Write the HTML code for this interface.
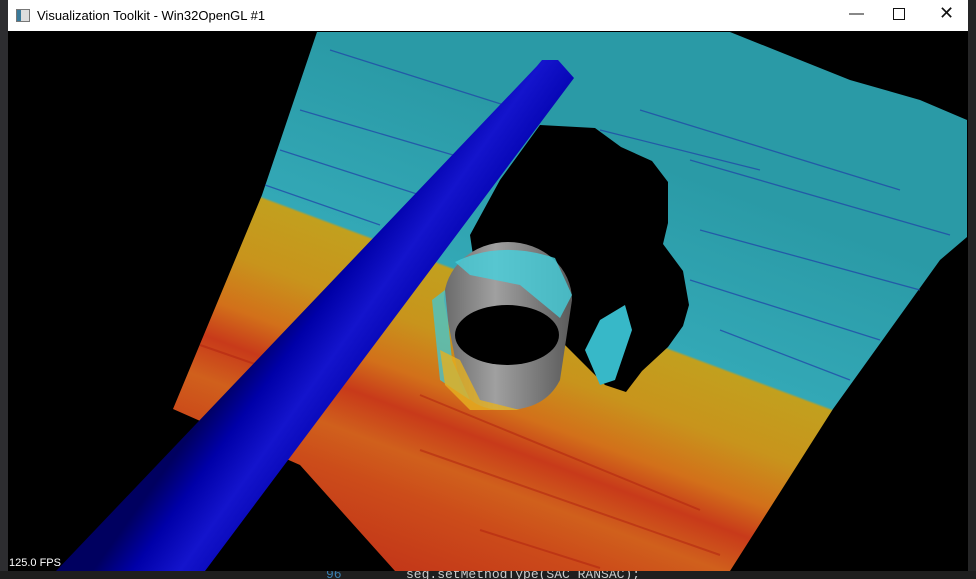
<!DOCTYPE html>
<html><head><meta charset="utf-8"><style>
html,body{margin:0;padding:0;width:976px;height:579px;overflow:hidden;background:#1e1e1e;font-family:"Liberation Sans",sans-serif}
#win{position:absolute;left:8px;top:0;width:960px;height:571px;background:#000}
#title{position:absolute;left:0;top:0;width:960px;height:31px;background:#fff}
#title .t{position:absolute;left:29px;top:8px;font-size:13px;color:#000}
#title .ic{position:absolute;left:8px;top:9px;width:12px;height:11px;border:1px solid #777;background:linear-gradient(90deg,#3a7a9a 0 4px,#ddd 4px)}
.b{position:absolute;top:5px;font-size:15px;color:#111}
#fps{position:absolute;left:1px;top:557px;font-size:11px;color:#fff}
#bot{position:absolute;left:0;top:571px;width:976px;height:8px;background:#1e1e1e;overflow:hidden}
#bot span{position:absolute;top:-4px;font-family:"Liberation Mono",monospace;font-size:13px;color:#ccc}
</style></head><body>
<div style="position:absolute;left:0;top:0;width:8px;height:579px;background:#2d2d30"></div>
<div style="position:absolute;left:968px;top:0;width:8px;height:579px;background:#252526"></div>
<div id="win">
<svg width="960" height="571" style="position:absolute;left:0;top:0">
<defs>
<linearGradient id="cl" gradientUnits="userSpaceOnUse" x1="492" y1="100" x2="317" y2="570">
<stop offset="0" stop-color="#2a9aa6"/>
<stop offset="0.34" stop-color="#33a8b6"/>
<stop offset="0.345" stop-color="#c2a01e"/>
<stop offset="0.47" stop-color="#c8941c"/>
<stop offset="0.57" stop-color="#d2701a"/>
<stop offset="0.64" stop-color="#c83a1a"/>
<stop offset="0.72" stop-color="#d0601c"/>
<stop offset="0.8" stop-color="#cc4c1a"/>
<stop offset="1" stop-color="#c03018"/>
</linearGradient>
<linearGradient id="cy" gradientUnits="userSpaceOnUse" x1="300" y1="280" x2="405" y2="355">
<stop offset="0" stop-color="#000060"/>
<stop offset="0.25" stop-color="#0000a8"/>
<stop offset="0.55" stop-color="#1414cc"/>
<stop offset="0.8" stop-color="#0808b8"/>
<stop offset="1" stop-color="#000090"/>
</linearGradient>
<linearGradient id="gr" x1="0" x2="1">
<stop offset="0" stop-color="#6a6a6a"/><stop offset="0.4" stop-color="#a0a0a0"/><stop offset="1" stop-color="#5a5a5a"/>
</linearGradient>
</defs>
<g transform="translate(-8,0)">
<polygon fill="url(#cl)" points="317,32 730,32 780,52 850,80 920,100 967,120 967,237 940,260 833,409 730,571 395,571 300,465 173,409 262,195"/>
<g stroke="#1f3fa8" stroke-width="1.3" opacity="0.7" fill="none">
<path d="M330,50 L520,110"/><path d="M300,110 L470,160"/><path d="M280,150 L420,195"/>
<path d="M265,185 L380,225"/><path d="M640,110 L900,190"/><path d="M690,160 L950,235"/>
<path d="M700,230 L920,290"/><path d="M690,280 L880,340"/><path d="M720,330 L850,380"/>
<path d="M600,130 L760,170"/>
</g>
<g stroke="#b02010" stroke-width="2" opacity="0.5" fill="none">
<path d="M200,345 L330,390"/><path d="M420,395 L700,510"/><path d="M420,450 L720,555"/><path d="M480,530 L600,568"/>
</g>
<path fill="#000" d="M540,125 L595,128 L621,147 L652,161 L668,182 L668,223 L663,244 L683,271 L689,305 L683,326 L668,347 L642,371 L626,392 L605,385 L580,360 L560,340 L520,300 L474,262 L470,235 L500,180 Z"/>
<path fill="#37b8c8" d="M600,320 L625,305 L632,330 L615,380 L600,385 L585,350 Z"/>
<path fill="url(#gr)" d="M444,300 A64,58 0 0 1 572,300 L560,380 Q545,410 505,410 Q470,410 460,385 Z"/>
<path fill="#45d0dc" opacity="0.8" d="M455,262 Q500,240 555,258 L572,295 L560,318 L520,285 L470,275 Z"/>
<path fill="#40c8d6" opacity="0.75" d="M432,300 L445,290 L452,360 L470,400 L440,380 Z"/>
<path fill="#e5b020" opacity="0.8" d="M440,350 L460,360 L480,400 L520,410 L470,410 L445,385 Z"/>
<ellipse cx="507" cy="335" rx="52" ry="30" fill="#000"/>
<polygon fill="url(#cy)" points="542,60 558,60 574,78 205,571 56,571 537,66"/>
</g>
</svg>
<div id="title"><div class="ic"></div><div class="t">Visualization Toolkit - Win32OpenGL #1</div>
<div class="b" style="left:841px">&#8212;</div>
<div class="b" style="left:885px;top:8px;width:10px;height:10px;border:1px solid #111"></div>
<div class="b" style="left:931px;top:3px;font-size:18px">&#10005;</div></div>
<div id="fps">125.0 FPS</div>
</div>
<div id="bot"><span style="left:326px;color:#3a7fb0">96</span><span style="left:406px">seg.setMethodType(SAC_RANSAC);</span></div>
</body></html>
